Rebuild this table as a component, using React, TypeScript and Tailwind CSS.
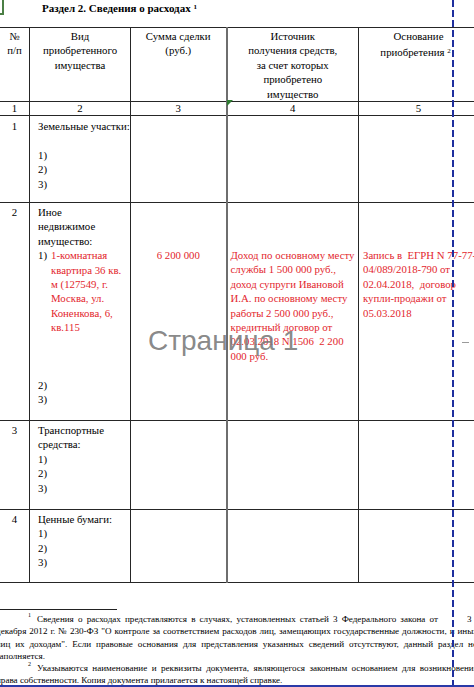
const RED = "text-[#e3262d]";
const CELL = "border border-[#262626] align-top p-0";

function JLine({ text, className = "" }: { text: string; className?: string }) {
  return (
    <div className={"flex justify-between whitespace-pre " + className}>
      {text.split(" ").map((w, i) => (
        <span key={i}>{w}</span>
      ))}
    </div>
  );
}

function Lines({ items, className = "" }: { items: string[]; className?: string }) {
  return (
    <div className={className}>
      {items.map((t, i) => (
        <div key={i} className="whitespace-pre">
          {t}
        </div>
      ))}
    </div>
  );
}

function Items({ from = 1 }: { from?: number }) {
  return <Lines items={[1, 2, 3].filter((n) => n >= from).map((n) => `${n})`)} />;
}

export default function App() {
  return (
    <div className="relative h-[687px] w-[474px] overflow-hidden bg-white font-['Liberation_Serif','Times_New_Roman',serif] text-black">
      <div className="ml-[-3px] w-[481px]">
        <h1 className="h-[27px] pl-[45px] pt-[1px] text-[11px] font-bold leading-[14px]">
          Раздел 2. Сведения о расходах <sup className="text-[7px]">1</sup>
        </h1>

        <table className="w-[481px] table-fixed border-collapse text-[10.8px] leading-[14.4px]">
          <colgroup>
            <col className="w-[32px]" />
            <col className="w-[101px]" />
            <col className="w-[96px]" />
            <col className="w-[132px]" />
            <col className="w-[120px]" />
          </colgroup>
          <tbody>
            <tr className="h-[73px] text-center leading-[14.4px]">
              <td className={CELL + " pt-px"}>
                <Lines items={["№", "п/п"]} className="pl-[2px]" />
              </td>
              <td className={CELL + " pt-px"}>
                <Lines items={["Вид", "приобретенного", "имущества"]} />
              </td>
              <td className={CELL + " pt-px"}>
                <Lines items={["Сумма сделки", "(руб.)"]} />
              </td>
              <td className={CELL + " border-l-2 border-l-[#6e6e6e] pt-px"}>
                <Lines items={["Источник", "получения средств,", "за счет которых", "приобретено", "имущество"]} />
              </td>
              <td className={CELL + " pt-px"}>
                <div>Основание</div>
                <div className="mt-[2px] pr-[6px]">
                  приобретения <sup className="text-[7px]">2</sup>
                </div>
              </td>
            </tr>

            <tr className="h-[14px] text-center leading-[12px]">
              <td className={CELL + " pl-[2px] align-middle"}>1</td>
              <td className={CELL + " align-middle"}>2</td>
              <td className={CELL + " align-middle"}>3</td>
              <td className={CELL + " border-l-2 border-l-[#6e6e6e] align-middle"}>4</td>
              <td className={CELL + " align-middle"}>5</td>
            </tr>

            <tr className="h-[87px]">
              <td className={CELL + " pl-[2px] pt-[3px] text-center"}>1</td>
              <td className={CELL + " pl-[8px] pt-[3px]"}>
                <div>Земельные участки:</div>
                <div className="h-[14.4px]" />
                <Items />
              </td>
              <td className={CELL} />
              <td className={CELL + " border-l-2 border-l-[#6e6e6e]"} />
              <td className={CELL} />
            </tr>

            <tr className="h-[218px]">
              <td className={CELL + " pl-[2px] pt-[2px] text-center"}>2</td>
              <td className={CELL + " pl-[8px] pt-[2px]"}>
                <Lines items={["Иное", "недвижимое", "имущество:"]} />
                <div className="flex">
                  <span className="w-[13px] shrink-0">1)</span>
                  <Lines
                    className={RED}
                    items={["1-комнатная", "квартира 36 кв.", "м (127549, г.", "Москва, ул.", "Коненкова, 6,", "кв.115"]}
                  />
                </div>
                <div className="h-[43.2px]" />
                <Items from={2} />
              </td>
              <td className={CELL + " pt-[45px] text-center " + RED}>6 200 000</td>
              <td className={CELL + " border-l-2 border-l-[#6e6e6e] pl-[3px] pt-[45px] " + RED}>
                <Lines
                  items={[
                    "Доход по основному месту",
                    "службы 1 500 000 руб.,",
                    "доход супруги Ивановой",
                    "И.А. по основному месту",
                    "работы 2 500 000 руб.,",
                    "кредитный договор от",
                    "02.03.2018 N 1506  2 200",
                    "000 руб.",
                  ]}
                />
              </td>
              <td className={CELL + " pl-[4px] pt-[45px] " + RED}>
                <Lines
                  items={["Запись в  ЕГРН N 77-77-", "04/089/2018-790 от", "02.04.2018,  договор", "купли-продажи от", "05.03.2018"]}
                />
              </td>
            </tr>

            <tr className="h-[89px]">
              <td className={CELL + " pl-[2px] pt-[2px] text-center"}>3</td>
              <td className={CELL + " pl-[8px] pt-[2px]"}>
                <Lines items={["Транспортные", "средства:"]} />
                <Items />
              </td>
              <td className={CELL} />
              <td className={CELL + " border-l-2 border-l-[#6e6e6e]"} />
              <td className={CELL} />
            </tr>

            <tr className="h-[73px]">
              <td className={CELL + " pl-[2px] pt-[2px] text-center"}>4</td>
              <td className={CELL + " pl-[8px] pt-[2px]"}>
                <div>Ценные бумаги:</div>
                <Items />
              </td>
              <td className={CELL} />
              <td className={CELL + " border-l-2 border-l-[#6e6e6e]"} />
              <td className={CELL} />
            </tr>
          </tbody>
        </table>

        <div className="mt-[26px] h-px w-[120px] bg-[#222]" />

        <div className="mt-[3px] text-[9.1px] leading-[12px]">
          <div className="flex h-[12px]">
            <sup className="ml-[31px] mt-[1px] w-[9px] shrink-0 text-[6px] leading-[8px]">1</sup>
            <JLine className="w-[401px] shrink-0" text="Сведения о расходах представляются в случаях, установленных статьей 3 Федерального закона от" />
            <span className="ml-[29px]">3</span>
          </div>
          <JLine className="ml-[-1px] h-[12.5px] w-[482px]" text='декабря 2012 г. № 230-ФЗ "О контроле за соответствием расходов лиц, замещающих государственные должности, и иных' />
          <JLine className="ml-[-1px] h-[12.5px] w-[481px]" text='лиц их доходам". Если правовые основания для представления указанных сведений отсутствуют, данный раздел не' />
          <div className="ml-[-1px] h-[12px]">заполняется.</div>
          <div className="flex h-[11.5px]">
            <sup className="ml-[31px] mt-[1px] w-[9px] shrink-0 text-[6px] leading-[8px]">2</sup>
            <JLine className="w-[441px] shrink-0" text="Указываются наименование и реквизиты документа, являющегося законным основанием для возникновения" />
          </div>
          <div className="ml-[-1px]">права собственности. Копия документа прилагается к настоящей справке.</div>
        </div>
      </div>

      {/* page marks */}
      <div className="absolute left-0 top-0 h-[15px] w-[4px] border-b-2 border-r-2 border-[#4b7f45]" />
      <div className="absolute left-[227px] top-[100px] h-0 w-0 border-r-[6px] border-t-[6px] border-r-transparent border-t-[#2f7d32]" />
      <div className="pointer-events-none absolute left-[148px] top-[327px] font-['Liberation_Sans',Arial,sans-serif] text-[28px] leading-[28px] text-[#7a7a7a]/90">
        Страница 1
      </div>
      <div className="absolute left-[462px] top-[342px] h-px w-[7px] bg-[#9a9a9a]" />
      <svg className="absolute left-[452px] top-0" width="2" height="687">
        <line x1="1" y1="0" x2="1" y2="687" stroke="#1f2f9e" strokeWidth="2" strokeDasharray="7 3" />
      </svg>
      <div className="absolute left-0 top-[685px] h-[2px] w-full bg-[#2a3aa8]" />
    </div>
  );
}
